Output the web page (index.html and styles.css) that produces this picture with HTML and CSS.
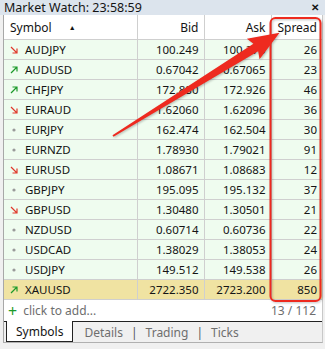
FILE: index.html
```html
<!DOCTYPE html>
<html lang="en">
  <head>
    <meta charset="UTF-8" />
    <title>Market Watch</title>
    <link rel="stylesheet" href="styles.css">
  </head>
  <body>
    <div class="titlebar">
      <span>Market Watch: 23:58:59</span>
      <span class="close">&#x2715;</span>
    </div>

    <div class="panel">
      <table class="quotes">
        <colgroup>
          <col class="c-symbol" />
          <col class="c-bid" />
          <col class="c-ask" />
          <col class="c-spread" />
        </colgroup>
        <thead>
          <tr>
            <th class="sym">Symbol <span class="sort">&#9650;</span></th>
            <th>Bid</th>
            <th>Ask</th>
            <th>Spread</th>
          </tr>
        </thead>
        <tbody id="rows"></tbody>
      </table>

      <div class="addrow">
        <span class="plus">+</span>
        <span class="hint">click to add...</span>
        <span class="count">13 / 112</span>
      </div>

      <div class="tabs">
        <span class="tab active">Symbols</span>
        <span class="tab">Details</span>
        <span class="sep">|</span>
        <span class="tab">Trading</span>
        <span class="sep">|</span>
        <span class="tab">Ticks</span>
      </div>
    </div>

    <!-- red annotation drawn over the table -->
    <svg class="annot" width="325" height="349" viewBox="0 0 325 349">
      <rect x="270.5" y="18" width="50" height="283" rx="5" fill="none" stroke="#ee2a1f" stroke-width="2" />
      <g transform="translate(113,136) rotate(-31.8)">
        <polygon points="0,-1 168,-4.5 165,-12 196,0 165,12 168,4.5 0,1" fill="#ee2a1f" />
      </g>
    </svg>

    <script>
      const quotes = [
        ["AUDJPY", "down", "100.249", "100.275", 26],
        ["AUDUSD", "up", "0.67042", "0.67065", 23],
        ["CHFJPY", "up", "172.880", "172.926", 46],
        ["EURAUD", "down", "1.62060", "1.62096", 36],
        ["EURJPY", "flat", "162.474", "162.504", 30],
        ["EURNZD", "flat", "1.78930", "1.79021", 91],
        ["EURUSD", "down", "1.08671", "1.08683", 12],
        ["GBPJPY", "flat", "195.095", "195.132", 37],
        ["GBPUSD", "down", "1.30480", "1.30501", 21],
        ["NZDUSD", "flat", "0.60714", "0.60736", 22],
        ["USDCAD", "flat", "1.38029", "1.38053", 24],
        ["USDJPY", "flat", "149.512", "149.538", 26],
        ["XAUUSD", "up", "2722.350", "2723.200", 850],
      ];

      const icons = {
        up: '<svg width="8" height="8" viewBox="0 0 8 8"><path d="M1 7L7 1M2.5 1H7V5.5" fill="none" stroke="#1c9a2a" stroke-width="1.2"/></svg>',
        down: '<svg width="8" height="8" viewBox="0 0 8 8"><path d="M1 1L7 7M2.5 7H7V2.5" fill="none" stroke="#e0392c" stroke-width="1.2"/></svg>',
        flat: '<svg width="8" height="8" viewBox="0 0 8 8"><circle cx="4" cy="4" r="1.6" fill="#9a9a9a"/></svg>',
      };

      const body = document.getElementById("rows");
      quotes.forEach(([sym, dir, bid, ask, spread]) => {
        const tr = document.createElement("tr");
        if (sym === "XAUUSD") tr.className = "gold";
        tr.innerHTML =
          '<td class="sym"><span class="trend">' + icons[dir] + "</span>" + sym + "</td>" +
          "<td>" + bid + "</td><td>" + ask + "</td><td>" + spread + "</td>";
        body.appendChild(tr);
      });
    </script>
  </body>
</html>
```

FILE: styles.css
```css
:root {
  --grid: #cfcfcf;
  --row-bg: #effcef;
  --gold-bg: #f0e3a2;
  --text: #141414;
  --muted: #6e6e6e;
}

body {
  margin: 0;
  width: 325px;
  height: 349px;
  background: #f0f0f0;
  font-family: "Noto Sans", sans-serif;
  font-size: 11.5px;
  color: var(--text);
  overflow: hidden;
  position: relative;
}

.titlebar {
  height: 15px;
  display: flex;
  justify-content: space-between;
  align-items: center;
  padding: 0 6px 0 4px;
  background: #dce4ed;
  font-size: 12.5px;
  line-height: 15px;
}

.close {
  font-size: 10px;
  font-weight: bold;
}

.panel {
  margin-left: 3px;
  width: 318px;
  background: #fff;
  border-left: 1px solid #a8a8a8;
  border-right: 1px solid #c8c8c8;
  border-bottom: 1px solid #b0b0b0;
}

.quotes {
  width: 100%;
  border-collapse: collapse;
  table-layout: fixed;
}

.c-symbol { width: 133px; }
.c-bid { width: 67px; }
.c-ask { width: 67px; }
.c-spread { width: 51px; }

.quotes th,
.quotes td {
  padding: 0 5px 0 0;
  text-align: right;
  white-space: nowrap;
  border-right: 1px solid var(--grid);
  border-bottom: 1px solid var(--grid);
}

.quotes th:last-child,
.quotes td:last-child {
  border-right: none;
}

.quotes th {
  height: 24px;
  font-weight: normal;
  font-size: 12px;
  background: #fff;
}

.quotes td {
  height: 19px;
  background: var(--row-bg);
}

.quotes tr.gold td {
  background: var(--gold-bg);
}

.quotes .sym {
  text-align: left;
  padding-left: 6px;
}

.sort {
  font-size: 7px;
  margin-left: 14px;
  vertical-align: 2px;
}

.trend {
  display: inline-block;
  width: 15px;
}

.addrow {
  height: 21px;
  display: flex;
  align-items: center;
  padding: 0 6px 0 4px;
  color: var(--muted);
  font-size: 12px;
}

.plus {
  color: #1c9a2a;
  font-size: 16px;
  line-height: 1;
  margin-right: 6px;
}

.count {
  margin-left: auto;
}

.tabs {
  height: 20px;
  display: flex;
  align-items: center;
  background: #f0f0f0;
  border-top: 1px solid #222;
  color: var(--muted);
  font-size: 12px;
}

.tab {
  padding: 0 8px;
}

.tab.active {
  margin-left: 2px;
  margin-right: 3px;
  margin-top: -1px;
  height: 21px;
  padding: 0 9px;
  display: flex;
  align-items: center;
  background: #fff;
  color: var(--text);
  border: 1px solid #222;
  border-top: none;
  box-sizing: border-box;
}

.sep {
  color: #555;
}

.annot {
  position: absolute;
  left: 0;
  top: 0;
  pointer-events: none;
  filter: drop-shadow(1px 1px 1px rgba(0, 0, 0, 0.25));
}
```
